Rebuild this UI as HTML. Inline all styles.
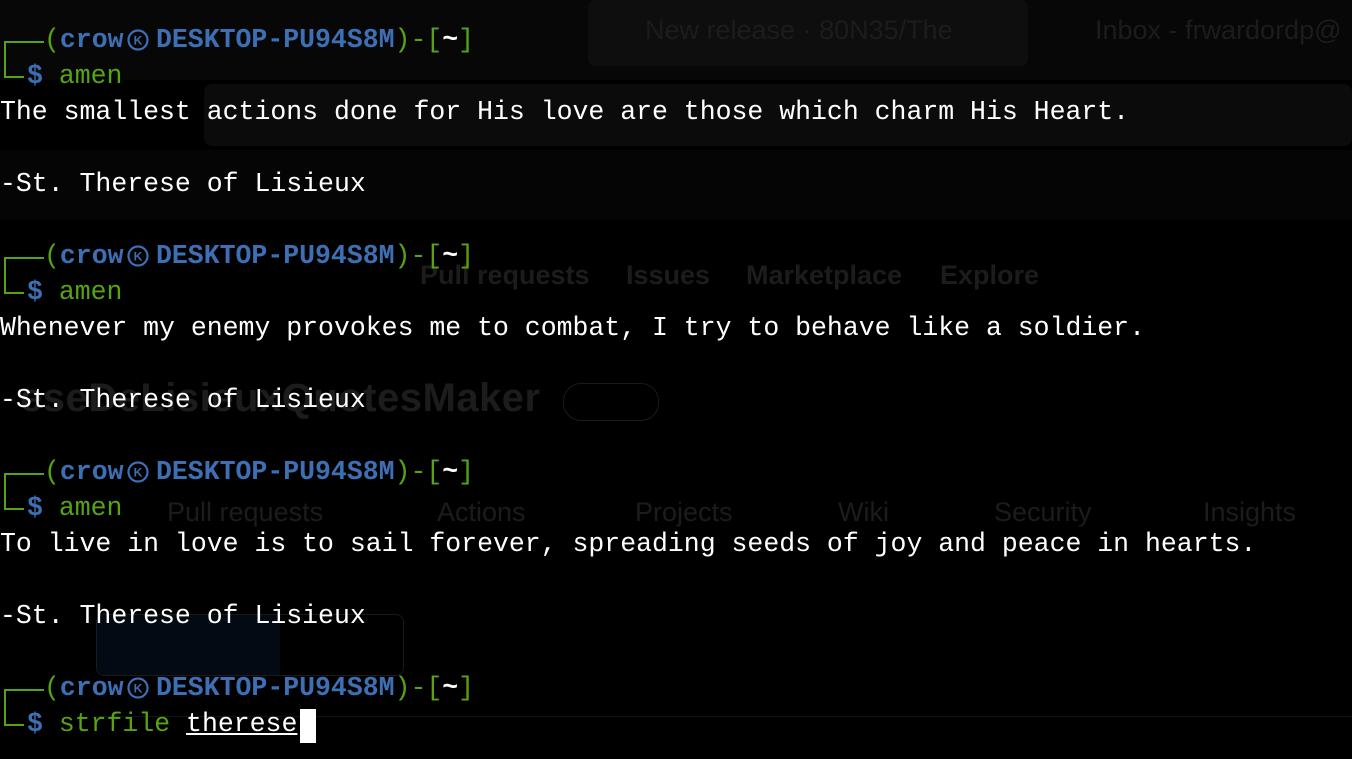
<!DOCTYPE html>
<html><head><meta charset="utf-8"><style>
html,body{margin:0;padding:0;background:#000;width:1352px;height:759px;overflow:hidden;}
.t{position:absolute;left:0;font-family:"Liberation Mono","DejaVu Sans Mono",monospace;font-size:26.5px;line-height:36px;height:36px;white-space:pre;color:#fff;}
.g{color:#58a312}.b{color:#3d6fb5;font-weight:bold}.w{color:#fff;font-weight:bold}
.ln{position:absolute;background:#58a312}
.ghost{position:absolute;font-family:"Liberation Sans",sans-serif;color:#1c1c1c;font-size:27px;white-space:nowrap}
</style></head><body>
<div style="position:absolute;left:0;top:0;width:1352px;height:80px;background:#070707"></div>
<div style="position:absolute;left:588px;top:0;width:440px;height:66px;background:#0e0e0e;border-radius:8px"></div>
<div style="position:absolute;left:204px;top:84px;width:1148px;height:62px;background:#0b0b0b;border-radius:8px"></div>
<div style="position:absolute;left:0;top:150px;width:1352px;height:70px;background:#050505"></div>
<div class="ghost" style="left:645px;top:15px">New release · 80N35/The</div>
<div class="ghost" style="left:1095px;top:15px">Inbox - frwardordp@</div>
<div class="ghost" style="left:420px;top:260px;font-weight:bold">Pull requests</div>
<div class="ghost" style="left:626px;top:260px;font-weight:bold">Issues</div>
<div class="ghost" style="left:746px;top:260px;font-weight:bold">Marketplace</div>
<div class="ghost" style="left:940px;top:260px;font-weight:bold">Explore</div>
<div class="ghost" style="left:20px;top:376px;font-size:40px;font-weight:bold;letter-spacing:0.5px">eseDeLisieuxQuotesMaker</div>
<div style="position:absolute;left:563px;top:383px;width:94px;height:36px;border:1px solid #1a1a1a;border-radius:18px"></div>
<div class="ghost" style="left:167px;top:497px">Pull requests</div>
<div class="ghost" style="left:437px;top:497px">Actions</div>
<div class="ghost" style="left:635px;top:497px">Projects</div>
<div class="ghost" style="left:838px;top:497px">Wiki</div>
<div class="ghost" style="left:994px;top:497px">Security</div>
<div class="ghost" style="left:1203px;top:497px">Insights</div>
<div style="position:absolute;left:96px;top:614px;width:306px;height:60px;border:1px solid #1a1a1a;border-radius:8px"></div>
<div style="position:absolute;left:97px;top:615px;width:183px;height:60px;background:#040a14;border-radius:8px 0 0 8px"></div>
<div style="position:absolute;left:96px;top:716px;width:1256px;height:1px;background:#141414"></div>

<div id="p"></div>
<script>
var ys=[22,238,454,670];
var cmds=['<span class="g">amen</span>','<span class="g">amen</span>','<span class="g">amen</span>','<span class="g">strfile</span> <span style="text-decoration:underline">therese</span>'];
var h='';
ys.forEach(function(y,i){
 h+='<div class="ln" style="left:4px;top:'+(y+19)+'px;width:40px;height:2px"></div>';
 h+='<div class="ln" style="left:4px;top:'+(y+19)+'px;width:2px;height:37px"></div>';
 h+='<div class="ln" style="left:4px;top:'+(y+54)+'px;width:20px;height:2px"></div>';
 h+='<div class="t" style="top:'+y+'px;left:44px"><span class="g">(</span><span class="b">crow</span></div>';
 h+='<svg style="position:absolute;left:127px;top:'+(y+7)+'px" width="22" height="22" viewBox="0 0 22 22"><circle cx="11" cy="11" r="9.5" fill="none" stroke="#3d6fb5" stroke-width="2.2"/><text x="11" y="15.5" font-family="Liberation Sans" font-weight="bold" font-size="12" fill="#3d6fb5" text-anchor="middle">K</text></svg>';
 h+='<div class="t" style="top:'+y+'px;left:156px"><span class="b">DESKTOP-PU94S8M</span><span class="g">)-[</span><span class="w">~</span><span class="g">]</span></div>';
 h+='<div class="t" style="top:'+(y+36)+'px;left:27px"><span class="b">$</span> '+cmds[i]+'</div>';
});
var q=["The smallest actions done for His love are those which charm His Heart.","Whenever my enemy provokes me to combat, I try to behave like a soldier.","To live in love is to sail forever, spreading seeds of joy and peace in hearts."];
[94,310,526].forEach(function(y,i){
 h+='<div class="t" style="top:'+y+'px">'+q[i]+'</div>';
 h+='<div class="t" style="top:'+(y+72)+'px">-St. Therese of Lisieux</div>';
});
document.getElementById('p').innerHTML=h;
</script>
<div style="position:absolute;left:300px;top:709px;width:16px;height:34px;background:#fff"></div>
</body></html>
